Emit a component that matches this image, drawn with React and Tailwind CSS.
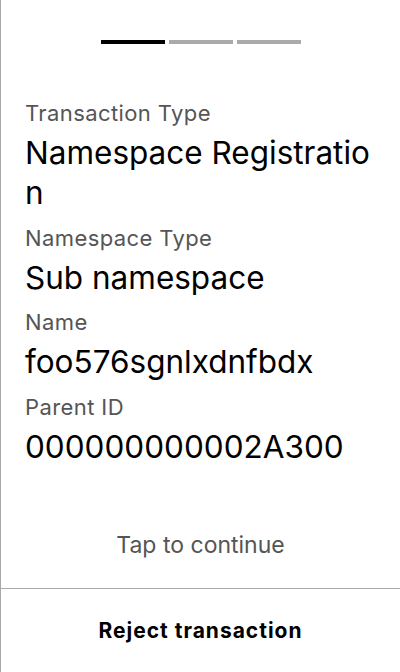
import React from 'react';

const fields = [
  { label: 'Transaction Type', value: 'Namespace Registration' },
  { label: 'Namespace Type', value: 'Sub namespace' },
  { label: 'Name', value: 'foo576sgnlxdnfbdx' },
  { label: 'Parent ID', value: '000000000002A300' },
];

// --- Step indicator ---
const Steps = ({ count = 3, active = 0 }) => (
  <div className="flex justify-center gap-1 pt-10">
    {Array.from({ length: count }).map((_, i) => (
      <div key={i} className={i === active ? 'h-1 w-16 bg-black' : 'h-1 w-16 bg-[#aaaaaa]'} />
    ))}
  </div>
);

export default function App() {
  return (
    <div
      className="flex h-[672px] w-[400px] flex-col border-l border-[#a8a8a8] bg-white text-black"
      style={{ fontFamily: 'Inter, "Noto Sans", sans-serif' }}
    >
      <Steps />

      <div className="flex flex-1 flex-col px-6 pt-[49px]">
        {fields.map((f) => (
          <div key={f.label} className="mb-[4.5px] flex flex-col">
            <div className="text-[22px] leading-[40px] tracking-[0.4px] text-[#555555]">{f.label}</div>
            <div className="break-all text-[31.5px] leading-[40px] text-black">{f.value}</div>
          </div>
        ))}
      </div>

      <div className="pb-[28px] text-center text-[23px] leading-[30px] text-[#555555]">Tap to continue</div>

      <div className="flex h-[84px] items-center justify-center border-t border-[#aaaaaa]">
        <span className="text-[21px] font-bold tracking-[1px] text-black">Reject transaction</span>
      </div>
    </div>
  );
}
